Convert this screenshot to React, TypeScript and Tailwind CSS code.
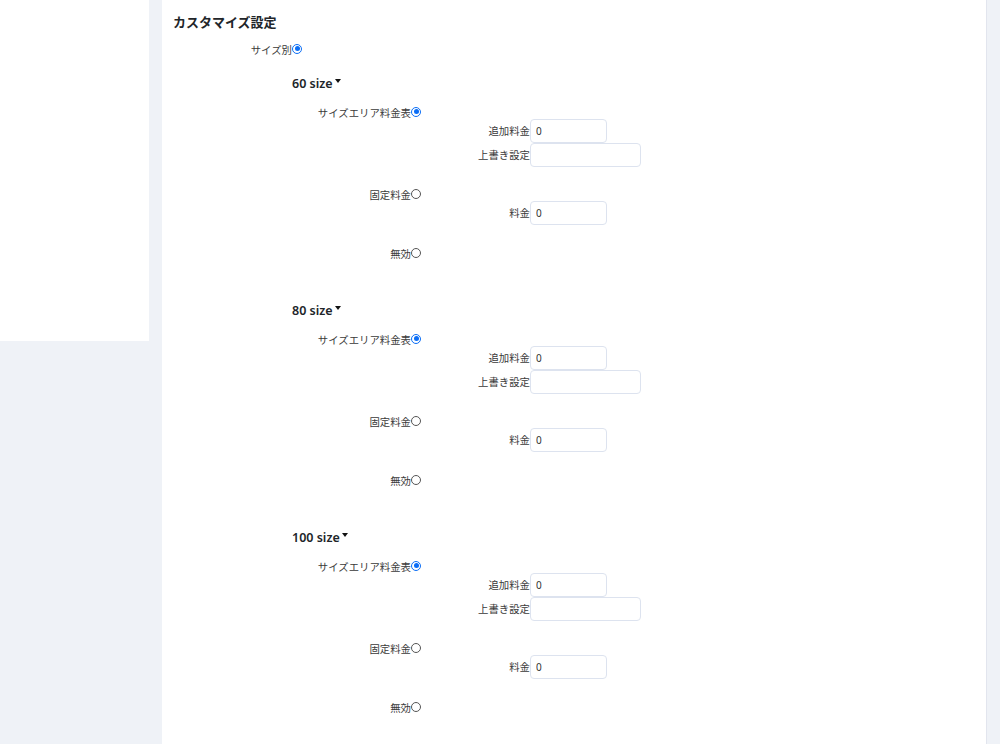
import React from "react";

const FONT = { fontFamily: '"Noto Sans", "Noto Sans CJK JP", sans-serif' };

function Radio({ checked }: { checked?: boolean }) {
  if (checked) {
    return (
      <span className="mt-[-3px] flex h-[10px] w-[10px] shrink-0 items-center justify-center rounded-full border-[1.5px] border-[#0b6ef6] bg-white">
        <span className="h-[5px] w-[5px] rounded-full bg-[#0b6ef6]" />
      </span>
    );
  }
  return <span className="mt-[-3px] block h-[10px] w-[10px] shrink-0 rounded-full border border-[#555] bg-white" />;
}

function OptionRow({ label, checked }: { label: string; checked?: boolean }) {
  return (
    <div className="flex h-[12px] items-center">
      <div className="w-[119px] whitespace-nowrap text-right text-[10.4px] leading-[12px] text-[#3a3a3a]">{label}</div>
      <Radio checked={checked} />
    </div>
  );
}

function Field({ label, value, wide }: { label: string; value?: string; wide?: boolean }) {
  return (
    <div className="flex h-[24px] items-center">
      <div className="w-[119px] whitespace-nowrap text-right text-[10.4px] leading-[12px] text-[#3a3a3a]">{label}</div>
      <input
        readOnly
        value={value ?? ""}
        className={`h-[24px] ${wide ? "w-[111px]" : "w-[77px]"} rounded-[4px] border border-[#dde3ef] bg-white px-[5px] text-[10px] text-[#333] outline-none`}
      />
    </div>
  );
}

function SizeSection({ size }: { size: string }) {
  return (
    <div className="pt-[20px] pb-[23px]">
      <div className="flex h-[16px] items-center text-[12.5px] font-semibold leading-[16px] text-[#212529]">
        <span>{size} size</span>
        <span className="mb-[6px] ml-[2px] inline-block h-0 w-0 border-x-[3.5px] border-t-[4px] border-x-transparent border-t-[#111]" />
      </div>
      <div className="mt-[15px]">
        <OptionRow label="サイズエリア料金表" checked />
        <div className="pl-[119px]">
          <Field label="追加料金" value="0" />
          <Field label="上書き設定" wide />
        </div>
      </div>
      <div className="mt-[22px]">
        <OptionRow label="固定料金" />
        <div className="pl-[119px]">
          <Field label="料金" value="0" />
        </div>
      </div>
      <div className="mt-[23px]">
        <OptionRow label="無効" />
      </div>
    </div>
  );
}

export default function App() {
  return (
    <div className="flex h-[744px] w-[1000px] items-start overflow-hidden bg-[#eff2f7]" style={FONT}>
      <div className="h-[341px] w-[149px] shrink-0 bg-white" />
      <div className="ml-[13px] h-[744px] w-[825px] shrink-0 border-r border-[#e2e5ee] bg-white px-[11px] pt-[12px]">
        <h2 className="text-[13px] font-bold leading-[20px] text-[#212529]">カスタマイズ設定</h2>
        <div className="mt-[12px]">
          <OptionRow label="サイズ別" checked />
          <div className="pl-[119px]">
            <SizeSection size="60" />
            <SizeSection size="80" />
            <SizeSection size="100" />
          </div>
        </div>
      </div>
    </div>
  );
}
